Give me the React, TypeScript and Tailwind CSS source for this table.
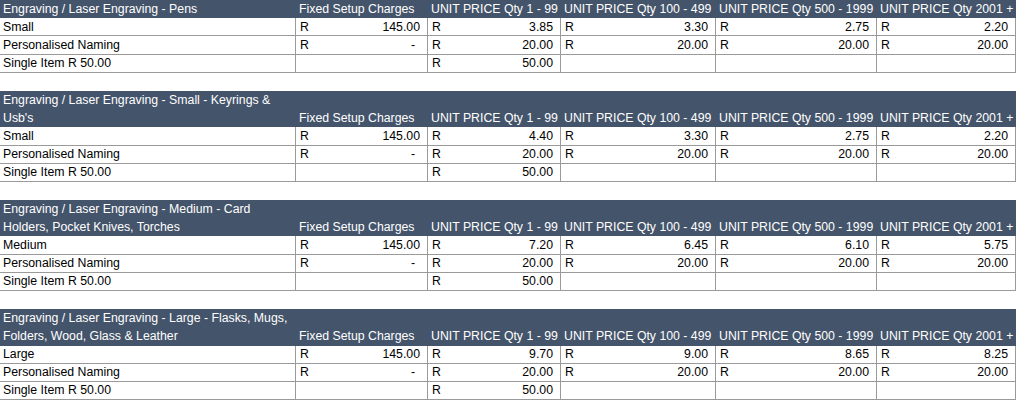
const sections = [
  {
    title: ["Engraving / Laser Engraving - Pens"],
    rows: [
      { name: "Small", setup: "145.00", prices: ["3.85", "3.30", "2.75", "2.20"] },
      { name: "Personalised Naming", setup: "-", prices: ["20.00", "20.00", "20.00", "20.00"] },
    ],
  },
  {
    title: ["Engraving / Laser Engraving - Small - Keyrings &", "Usb's"],
    rows: [
      { name: "Small", setup: "145.00", prices: ["4.40", "3.30", "2.75", "2.20"] },
      { name: "Personalised Naming", setup: "-", prices: ["20.00", "20.00", "20.00", "20.00"] },
    ],
  },
  {
    title: ["Engraving / Laser Engraving - Medium - Card", "Holders, Pocket Knives, Torches"],
    rows: [
      { name: "Medium", setup: "145.00", prices: ["7.20", "6.45", "6.10", "5.75"] },
      { name: "Personalised Naming", setup: "-", prices: ["20.00", "20.00", "20.00", "20.00"] },
    ],
  },
  {
    title: ["Engraving / Laser Engraving - Large - Flasks, Mugs,", "Folders, Wood, Glass & Leather"],
    rows: [
      { name: "Large", setup: "145.00", prices: ["9.70", "9.00", "8.65", "8.25"] },
      { name: "Personalised Naming", setup: "-", prices: ["20.00", "20.00", "20.00", "20.00"] },
    ],
  },
];

const headings = [
  "Fixed Setup Charges",
  "UNIT PRICE Qty 1 - 99",
  "UNIT PRICE Qty 100 - 499",
  "UNIT PRICE Qty 500 - 1999",
  "UNIT PRICE Qty 2001 +",
];

const grid = "grid grid-cols-[296px_132px_133px_155px_161px_139px]";
const cell = "h-[18.2px] border-r border-b border-[#9a9a9a] flex items-center leading-none overflow-hidden whitespace-nowrap";

function Money({ value, dash }: { value?: string; dash?: boolean }) {
  if (value === undefined) return <div className={cell} />;
  return (
    <div className={`${cell} justify-between pl-[4px] ${dash ? "pr-[12px]" : "pr-[7px]"}`}>
      <span>R</span>
      <span>{value}</span>
    </div>
  );
}

function Section({ s }: { s: (typeof sections)[number] }) {
  const tall = s.title.length > 1;
  return (
    <div className="w-[1016px]">
      <div className={`${grid} bg-[#44546a] text-white ${tall ? "h-[36.4px]" : "h-[18.2px]"}`}>
        <div className="flex flex-col justify-end pl-[3px]">
          {s.title.map((t) => (
            <span key={t} className="h-[18.2px] flex items-end pb-[3px] leading-none whitespace-nowrap">
              {t}
            </span>
          ))}
        </div>
        {headings.map((h) => (
          <div key={h} className="flex items-end pl-[3px] pb-[3px] leading-none whitespace-nowrap">
            {h}
          </div>
        ))}
      </div>
      {s.rows.map((r) => (
        <div key={r.name} className={grid}>
          <div className={`${cell} pl-[3px]`}>{r.name}</div>
          <Money value={r.setup} dash={r.setup === "-"} />
          {r.prices.map((p, i) => (
            <Money key={i} value={p} />
          ))}
        </div>
      ))}
      <div className={grid}>
        <div className={`${cell} pl-[3px]`}>Single Item R 50.00</div>
        <Money />
        <Money value="50.00" />
        <Money />
        <Money />
        <Money />
      </div>
    </div>
  );
}

export default function App() {
  return (
    <div className="w-[1024px] h-[407px] bg-white text-black text-[12.3px] font-['Liberation_Sans',Arial,sans-serif] overflow-hidden">
      {sections.map((s, i) => (
        <div key={i}>
          <Section s={s} />
          <div className="h-[18.2px]" />
        </div>
      ))}
    </div>
  );
}
